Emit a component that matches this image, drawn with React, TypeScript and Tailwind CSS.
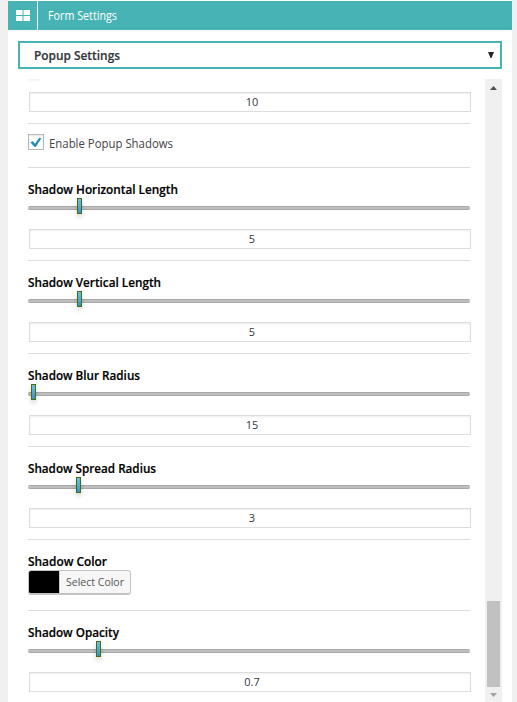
import React from "react";

const fieldClass =
  "ml-px block h-5 w-[442px] border border-[#ddd] bg-white pt-0 pr-0 pb-[2px] pl-[4px] text-center text-[11px] leading-[16px] text-[#32373c] shadow-[inset_0_1px_2px_rgba(0,0,0,0.07)] outline-none";

function Field({ value }: { value: string }) {
  return <input readOnly value={value} className={fieldClass} />;
}

type SliderProps = { title: string; titleWidth: number; value: string; offset: number };

function Label({ text, width }: { text: string; width: number }) {
  return (
    <svg className="block h-[18px] overflow-visible" width={width + 2} aria-label={text}>
      <text x="0" y="13" textLength={width} lengthAdjust="spacingAndGlyphs" className="fill-black stroke-black stroke-[0.2px] text-[12px] font-semibold">
        {text}
      </text>
    </svg>
  );
}

function SliderSetting({ title, titleWidth, value, offset }: SliderProps) {
  return (
    <section className="h-[93px] w-[442px] border-b border-[#ddd] pt-[13px]">
      <Label text={title} width={titleWidth} />
      <div className="flex h-4 items-center">
        <div className="relative mt-px h-[4px] w-full rounded-full border-y border-[#a8a8a8] bg-[#bfbfbf]">
          <span
            className="absolute top-[-9px] h-4 w-[5px] border border-[#4b6b12] bg-linear-to-b from-[#6cc0e5] to-[#2f96c8] shadow-[0_3px_5px_rgba(0,0,0,0.18)]"
            style={{ left: offset }}
          />
        </div>
      </div>
      <div className="mt-[14px]">
        <Field value={value} />
      </div>
    </section>
  );
}

export default function App() {
  return (
    <div className="h-[702px] w-[517px] overflow-hidden bg-[#f0f0f0] pl-2 font-['Open_Sans','Noto_Sans',sans-serif]">
      <main className="flex h-full w-[504px] flex-col bg-white pt-px">
        <header className="flex h-[29px] shrink-0 bg-[#48b3b5] text-white">
          <div className="flex w-[30px] items-center justify-center border-r border-white">
            <svg width="14" height="11" fill="#fff">
              <path d="M0 0h6.5v5H0zM7.5 0H14v5H7.5zM0 6h6.5v5H0zM7.5 6H14v5H7.5z" />
            </svg>
          </div>
          <svg width="90" height="29" aria-label="Form Settings">
            <text x="10" y="19" textLength="69" lengthAdjust="spacingAndGlyphs" className="fill-white text-[12px]">Form Settings</text>
          </svg>
        </header>

        <div className="mx-[10px] mt-[11px] flex h-7 shrink-0 items-center justify-between border-2 border-[#48b3b5] pr-[6px] pl-[14px]">
          <svg width="100" height="24" className="overflow-visible" aria-label="Popup Settings">
            <text x="0" y="17" textLength="86" lengthAdjust="spacingAndGlyphs" className="fill-[#32373c] stroke-[#32373c] stroke-[0.2px] text-[12.5px] font-semibold">Popup Settings</text>
          </svg>
          <svg width="6" height="6" className="mb-px">
            <path d="M0 0h6L3.5 6h-1z" fill="#23282d" />
          </svg>
        </div>

        <div className="mx-[10px] mt-[10px] flex min-h-0 flex-1 justify-between">
          <div className="h-full w-[454px] overflow-hidden pl-[10px]">
            <div className="h-[45px] w-[442px] border-b border-[#ddd]">
              <div className="mb-[10px] h-[3px] w-3 rounded-b-full bg-linear-to-b from-[#f2f2f2] to-white" />
              <Field value="10" />
            </div>
            <label className="flex h-11 w-[442px] border-b border-[#ddd] pt-[10px]">
              <span className="flex size-4 items-center justify-center border border-[#b4b9be] bg-white shadow-[inset_0_1px_2px_rgba(0,0,0,0.1)]">
                <svg width="12" height="11" viewBox="0 0 12 11" className="shrink-0" fill="#1e8cbe">
                  <path d="M.5 5.5 2.7 4 5 6.8 9.2.8 11.4 1.2 5.7 10H4.6z" />
                </svg>
              </span>
              <svg width="130" height="20" className="ml-[5px] overflow-visible" aria-label="Enable Popup Shadows">
                <text x="0" y="14" textLength="124" lengthAdjust="spacingAndGlyphs" className="fill-[#444] text-[12px]">Enable Popup Shadows</text>
              </svg>
            </label>
            <SliderSetting title="Shadow Horizontal Length" titleWidth={150} value="5" offset={49} />
            <SliderSetting title="Shadow Vertical Length" titleWidth={133} value="5" offset={49} />
            <SliderSetting title="Shadow Blur Radius" titleWidth={112} value="15" offset={3} />
            <SliderSetting title="Shadow Spread Radius" titleWidth={128} value="3" offset={48} />
            <section className="h-[71px] w-[442px] border-b border-[#ddd] pt-[13px]">
              <Label text="Shadow Color" width={79} />
              <button className="-mt-px flex h-[25px] w-[103px] overflow-hidden rounded-[3px] border border-b-2 border-[#c4c4c4] bg-[#f7f7f7]">
                <span className="h-full w-[30px] bg-black" />
                <span className="h-full w-px bg-[#ccc]" />
                <svg width="68" height="22" aria-label="Select Color">
                  <text x="6" y="15" textLength="58" lengthAdjust="spacingAndGlyphs" className="fill-[#555] text-[11px]">Select Color</text>
                </svg>
              </button>
            </section>
            <SliderSetting title="Shadow Opacity" titleWidth={91} value="0.7" offset={68} />
          </div>

          <div className="flex h-full w-[17px] flex-col items-center bg-[#f0f0f0]">
            <svg width="7" height="4" className="mt-[7px] shrink-0">
              <path d="M0 4 3.5 0 7 4z" fill="#505050" />
            </svg>
            <div className="mt-[511px] h-[86px] w-[13px] shrink-0 bg-[#c1c1c1]" />
            <svg width="7" height="4" className="mt-[6px] shrink-0">
              <path d="M0 0h7L3.5 4z" fill="#a3a3a3" />
            </svg>
          </div>
        </div>
      </main>
    </div>
  );
}
